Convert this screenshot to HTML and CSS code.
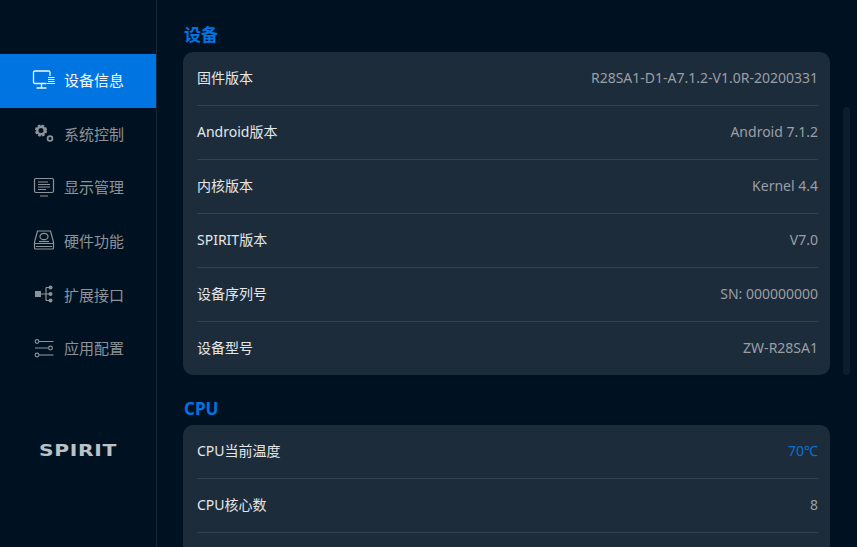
FILE: index.html
```html
<!DOCTYPE html>
<html lang="zh-CN">
<head>
  <meta charset="UTF-8" />
  <meta name="viewport" content="width=device-width, initial-scale=1.0" />
  <title>SPIRIT</title>
  <link rel="stylesheet" href="styles.css">
</head>
<body>
  <div class="app">
    <!-- sidebar -->
    <aside class="sidebar">
      <nav class="menu">
        <a class="menu-item active">
          <svg class="icon" viewBox="0 0 24 20" fill="none" stroke="currentColor" stroke-width="1.3">
            <path d="M14.500 14.500H3a1.500 1.500 0 0 1-1.500-1.500V3.500A1.500 1.500 0 0 1 3 2h13.500A1.500 1.500 0 0 1 18 3.500V7"/>
            <path d="M9.500 14.500v4M4.500 19h10"/>
            <path d="M16 8.500h6.500M16 10.500h6.500M16 12.500h6.500M15 14.500h8" stroke-width="1.100"/>
          </svg>
          <span>设备信息</span>
        </a>
        <a class="menu-item">
          <svg class="icon" viewBox="0 0 24 20" fill="none" stroke="currentColor">
            <circle cx="9" cy="7.500" r="4.700" stroke-width="2.800" stroke-dasharray="2.400 1.300"/>
            <circle cx="9" cy="7.500" r="3.700" stroke-width="2.400"/>
            <circle cx="18" cy="15.500" r="2.400" stroke-width="1.700"/>
          </svg>
          <span>系统控制</span>
        </a>
        <a class="menu-item">
          <svg class="icon" viewBox="0 0 24 20" fill="none" stroke="currentColor" stroke-width="1.200">
            <rect x="2.500" y="1.500" width="19" height="14" rx="1.500"/>
            <path d="M6 5h10M6 7.500h12M6 10h12M6 12.500h8M8 19h8" stroke-width="1"/>
          </svg>
          <span>显示管理</span>
        </a>
        <a class="menu-item">
          <svg class="icon" viewBox="0 0 24 20" fill="none" stroke="currentColor" stroke-width="1.200">
            <path d="M5.500 1h13l3 11v6a1 1 0 0 1-1 1h-17a1 1 0 0 1-1-1v-6z"/>
            <path d="M2.500 13.500h19M4 16.500h16"/>
            <ellipse cx="12" cy="6.500" rx="4" ry="3.200"/>
            <path d="M7 11.500h10"/>
          </svg>
          <span>硬件功能</span>
        </a>
        <a class="menu-item">
          <svg class="icon" viewBox="0 0 24 20" fill="none" stroke="currentColor" stroke-width="1.200">
            <rect x="3" y="7" width="6" height="6" fill="currentColor" stroke="none"/>
            <path d="M9 10h5M14 3.500v13M14 3.500h3M14 10h3M14 16.500h3"/>
            <circle cx="18.500" cy="3.500" r="2" fill="currentColor" stroke="none"/>
            <circle cx="18.500" cy="10" r="2" fill="currentColor" stroke="none"/>
            <circle cx="18.500" cy="16.500" r="2" fill="currentColor" stroke="none"/>
          </svg>
          <span>扩展接口</span>
        </a>
        <a class="menu-item">
          <svg class="icon" viewBox="0 0 24 20" fill="none" stroke="currentColor" stroke-width="1.100">
            <circle cx="5" cy="3.500" r="1.900"/>
            <path d="M7 3.500h14.500M3 10h13.500"/>
            <circle cx="18.500" cy="10" r="1.900"/>
            <circle cx="5" cy="17" r="1.900"/>
            <path d="M7 17h14.500"/>
          </svg>
          <span>应用配置</span>
        </a>
      </nav>
      <div class="logo">SPIRIT</div>
    </aside>

    <!-- content -->
    <main class="content">
      <h2 class="section-title">设备</h2>
      <section class="card">
        <div class="row"><span>固件版本</span><span class="value">R28SA1-D1-A7.1.2-V1.0R-20200331</span></div>
        <div class="row"><span>Android版本</span><span class="value">Android 7.1.2</span></div>
        <div class="row"><span>内核版本</span><span class="value">Kernel 4.4</span></div>
        <div class="row"><span>SPIRIT版本</span><span class="value">V7.0</span></div>
        <div class="row"><span>设备序列号</span><span class="value">SN: 000000000</span></div>
        <div class="row"><span>设备型号</span><span class="value">ZW-R28SA1</span></div>
      </section>

      <h2 class="section-title">CPU</h2>
      <section class="card">
        <div class="row"><span>CPU当前温度</span><span class="value hot">70℃</span></div>
        <div class="row"><span>CPU核心数</span><span class="value">8</span></div>
        <div class="row"></div>
      </section>
    </main>

    <div class="scrollbar"></div>
  </div>
</body>
</html>
```

FILE: styles.css
```css
html, body {
  margin: 0;
  height: 100%;
  overflow: hidden;
}

body {
  background-color: #001221;
  font-family: "Noto Sans", "Noto Sans CJK SC", sans-serif;
  font-size: 14px;
  color: #e4e7ea;
}

.app {
  display: flex;
  height: 547px;
  overflow: hidden;
  position: relative;
}

/* sidebar */
.sidebar {
  width: 156px;
  flex-shrink: 0;
  border-right: 1px solid #14283a;
  padding-top: 54px;
}

.menu {
  display: flex;
  flex-direction: column;
}

.menu-item {
  height: 53.7px;
  box-sizing: border-box;
  display: flex;
  align-items: center;
  padding: 0 0 3px 32px;
  gap: 8px;
  font-size: 15px;
  color: #8d9398;
}

.menu-item.active {
  background-color: #0074e0;
  color: #f2f7fc;
}

.icon {
  width: 24px;
  height: 20px;
  flex-shrink: 0;
}

.logo {
  margin-top: 66px;
  text-align: center;
  font-family: "DejaVu Sans", sans-serif;
  font-weight: bold;
  font-size: 15px;
  letter-spacing: 0.5px;
  color: #bcc1c6;
  transform: scaleX(1.35);
}

/* content */
.content {
  flex: 1;
  padding: 0 27px 0 26px;
}

.section-title {
  margin: 0;
  height: 52px;
  padding: 24px 0 0 1px;
  box-sizing: border-box;
  font-size: 17px;
  line-height: 22px;
  font-weight: bold;
  color: #0074e0;
}

.card + .section-title {
  height: 50px;
  padding-top: 23px;
}

.card {
  background-color: #1d2c3b;
  border-radius: 10px;
  padding: 0 12px 0 14px;
}

.row {
  height: 53.95px;
  box-sizing: border-box;
  display: flex;
  justify-content: space-between;
  align-items: center;
  border-bottom: 1px solid #33424f;
  padding-bottom: 2px;
}

.row:last-child {
  height: 53.25px;
  border-bottom: none;
}

.value {
  color: #9a9fa5;
}

.value.hot {
  color: #0a70d0;
}

.scrollbar {
  position: absolute;
  left: 843px;
  top: 107px;
  width: 7px;
  height: 268px;
  border-radius: 4px;
  background-color: #0b1d2e;
}
```
